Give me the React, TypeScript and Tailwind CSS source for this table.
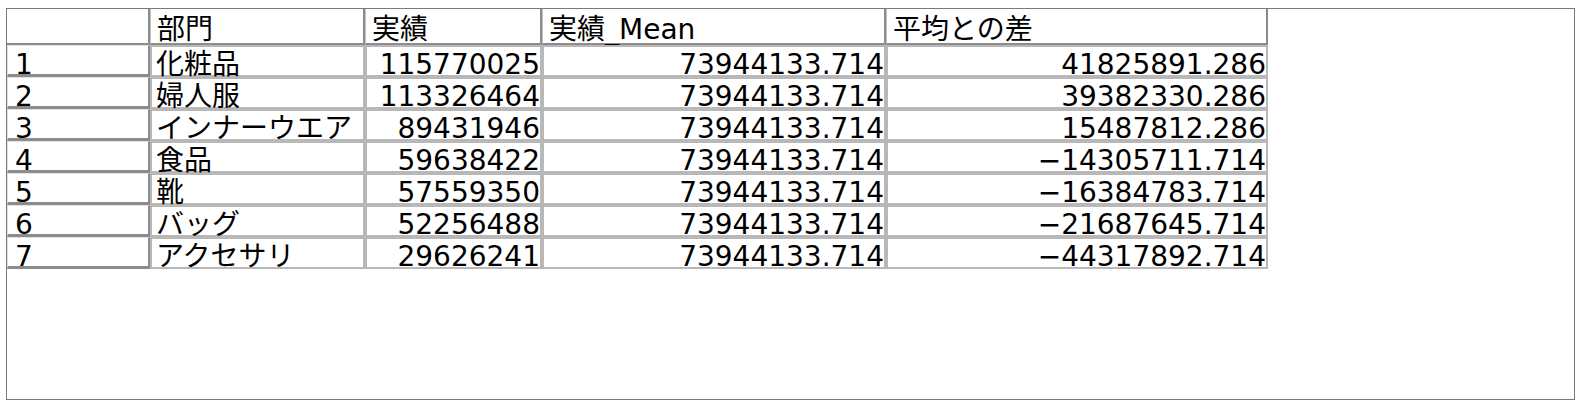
const headers = ["部門", "実績", "実績_Mean", "平均との差"];

const rows: [string, string, string, string][] = [
  ["化粧品", "115770025", "73944133.714", "41825891.286"],
  ["婦人服", "113326464", "73944133.714", "39382330.286"],
  ["インナーウエア", "89431946", "73944133.714", "15487812.286"],
  ["食品", "59638422", "73944133.714", "-14305711.714"],
  ["靴", "57559350", "73944133.714", "-16384783.714"],
  ["バッグ", "52256488", "73944133.714", "-21687645.714"],
  ["アクセサリ", "29626241", "73944133.714", "-44317892.714"],
];

const font = { fontFamily: '"DejaVu Sans", "Noto Sans CJK JP", sans-serif' };

export default function App() {
  return (
    <div className="w-[1580px] h-[410px] bg-white text-black pt-[8px] pl-[6px]" style={font}>
      <div className="w-[1569px] h-[392px] border border-[#7a7a7a] bg-white">
        <div className="grid grid-cols-[143px_215px_177px_344px_382px] grid-rows-[36px_repeat(7,32px)] w-[1261px] text-[28px]">
          {/* header row */}
          <div className="border-r-2 border-b-2 border-[#8c8c8c]" />
          {headers.map((h) => (
            <div
              key={h}
              className="pt-[8px] pl-[6px] leading-[26px] border-l border-l-[#c4c4c4] border-r-2 border-r-[#8c8c8c] border-b-2 border-b-[#8c8c8c] whitespace-nowrap"
            >
              {h}
            </div>
          ))}

          {rows.map((r, i) => (
            <Row key={i} index={i + 1} cells={r} />
          ))}
        </div>
      </div>
    </div>
  );
}

function Row({ index, cells }: { index: number; cells: [string, string, string, string] }) {
  const [name, actual, mean, diff] = cells;
  return (
    <>
      <div className="pt-[9px] pl-[7px] leading-[19px] border-t border-l border-t-[#e0e0e0] border-l-[#e0e0e0] border-r-2 border-r-[#8c8c8c] border-b-[3px] border-b-[#8c8c8c]">
        {index}
      </div>
      <div className="pt-[7px] pl-[4px] leading-[21px] border-2 border-[#b8b8b8] whitespace-nowrap">
        {name}
      </div>
      <div className="pt-[7px] leading-[21px] text-right border-2 border-[#b8b8b8]">
        {actual}
      </div>
      <div className="pt-[7px] leading-[21px] text-right border-2 border-[#b8b8b8]">
        {mean}
      </div>
      <div className="pt-[7px] leading-[21px] text-right border-2 border-[#b8b8b8]">
        {diff.replace("-", "\u2212")}
      </div>
    </>
  );
}
